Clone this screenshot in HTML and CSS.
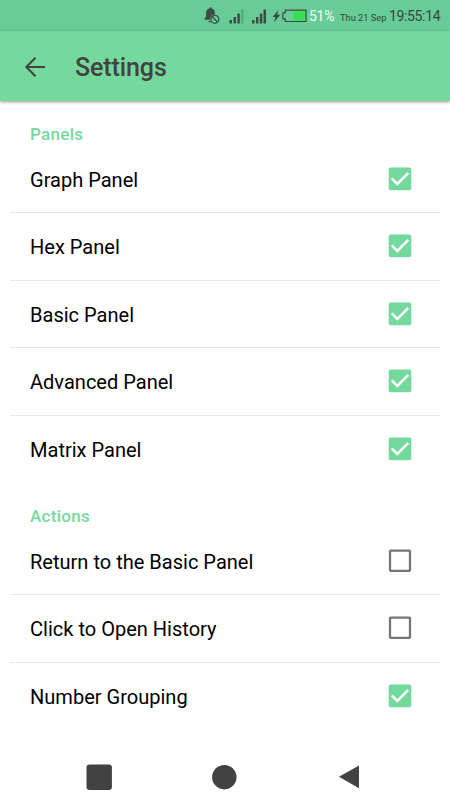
FILE: index.html
```html
<!DOCTYPE html>
<html lang="en">
<head>
<meta charset="utf-8">
<title>Settings</title>
<link rel="stylesheet" href="styles.css">
</head>
<body>
<svg class="defs" width="0" height="0">
  <symbol id="checked" viewBox="0 0 24 24">
    <rect x=".7" y=".6" width="22.6" height="22.6" rx="2" fill="#73d99c"/>
    <path d="M3.700 11.300 9.300 16.900 20.300 5.900" fill="none" stroke="#fff" stroke-width="2.600"/>
  </symbol>
  <symbol id="unchecked" viewBox="0 0 24 24">
    <rect x="2" y="1.600" width="20" height="20.200" rx=".8" fill="none" stroke="#757575" stroke-width="2.300"/>
  </symbol>
</svg>
<div class="status">
  <svg class="status-icons" width="112" height="31" viewBox="0 0 112 31" fill="#3d4b43">
    <path d="M4.500 19.800v-1.300l1.600-1.700v-4c0-2.300 1.100-3.900 3.300-4.400 0-1.500 2.200-1.500 2.200 0 2.200.5 3.300 2.100 3.300 4.400v1.400a5 5 0 0 0-5 5.600zM8.500 21h2v1.600c-1.100.1-1.900-.6-2-1.600z"/>
    <circle cx="14.800" cy="19.300" r="4" fill="none" stroke="#3d4b43" stroke-width="1.300"/>
    <path d="m12 16.500 5.600 5.600" stroke="#3d4b43" stroke-width="1.300"/>
    <path d="M29.500 20h2.500v3.500h-2.500zM33.500 17h2.500v6.500h-2.500zM37.300 13.500h2.500v10h-2.500z"/>
    <path d="M41 9.500h2.400v14H41z" opacity=".28"/>
    <path d="M52 20h2.500v3.500H52zM56 17h2.500v6.500H56zM59.800 13.500h2.500v10h-2.500zM63.500 9.500H66v14h-2.500z"/>
    <path d="m78.500 10-6 7h3l-1.700 5.300 6.700-7.600h-3.200z"/>
    <path d="M85.300 10.200H106v11.300H85.300v-2.600h-2.400v-6h2.400z" fill="none" stroke="#3d4b43" stroke-width="1.200"/>
    <path d="M93 11.200h12v9.300H93z" fill="#35e052"/>
  </svg>
  <span class="battery">51%</span>
  <span class="date">Thu 21 Sep</span>
  <span class="clock">19:55:14</span>
</div>
<header class="bar">
  <svg width="24" height="24" viewBox="0 0 24 24" fill="none" stroke="#424242" stroke-width="2"><path d="M22 12H3.500M12.500 2.800 3.300 12l9.200 9.200"/></svg>
  <h1>Settings</h1>
</header>
<main>
  <section>
    <h2>Panels</h2>
    <div class="row"><span>Graph Panel</span><svg class="box"><use href="#checked"/></svg></div>
    <div class="row"><span>Hex Panel</span><svg class="box"><use href="#checked"/></svg></div>
    <div class="row"><span>Basic Panel</span><svg class="box"><use href="#checked"/></svg></div>
    <div class="row"><span>Advanced Panel</span><svg class="box"><use href="#checked"/></svg></div>
    <div class="row"><span>Matrix Panel</span><svg class="box"><use href="#checked"/></svg></div>
  </section>
  <section>
    <h2>Actions</h2>
    <div class="row"><span>Return to the Basic Panel</span><svg class="box"><use href="#unchecked"/></svg></div>
    <div class="row"><span>Click to Open History</span><svg class="box"><use href="#unchecked"/></svg></div>
    <div class="row"><span>Number Grouping</span><svg class="box"><use href="#checked"/></svg></div>
  </section>
</main>
<nav>
  <svg width="28" height="28" viewBox="0 0 28 28"><rect x="1.500" y="1.500" width="25.400" height="25.600" rx="3" fill="#424242"/></svg>
  <svg width="28" height="28" viewBox="0 0 28 28"><circle cx="14.300" cy="14.200" r="12.200" fill="#424242"/></svg>
  <svg width="28" height="28" viewBox="0 0 28 28"><path d="M4 13.800 24 2.500v22.800z" fill="#424242"/></svg>
</nav>
</body>
</html>
```
FILE: styles.css
```css
* { box-sizing: border-box; }
body {
  margin: 0;
  width: 450px;
  height: 800px;
  display: flex;
  flex-direction: column;
  overflow: hidden;
  background: #fff;
  color: #000;
  font-family: Roboto, sans-serif;
}
.defs { position: absolute; }
.status {
  height: 31px;
  flex: none;
  display: flex;
  align-items: baseline;
  padding-left: 200px;
  background: #68cc98;
  line-height: 33px;
  white-space: nowrap;
  color: #35453c;
}
.status-icons { flex: none; align-self: flex-start; margin-right: -3px; }
.battery { width: 31px; font-size: 14px; letter-spacing: -.3px; color: #effff5; }
.date { width: 49px; font-size: 9.300px; }
.clock { font-size: 14px; letter-spacing: -.35px; }
.bar {
  height: 70px;
  flex: none;
  display: flex;
  align-items: center;
  gap: 28px;
  padding-left: 23px;
  background: #75d99e;
  box-shadow: 0 1px 3px rgba(0, 0, 0, .4);
}
.bar svg { margin-top: 1px; }
h1 { margin: 3px 0 0; font-size: 25px; font-weight: 500; letter-spacing: -.1px; color: #424242; }
main { flex: none; height: 652px; }
h2 {
  height: 44.500px;
  margin: 0;
  padding: 22px 30px 0;
  font-size: 17px;
  line-height: 22px;
  font-weight: 500;
  letter-spacing: .3px;
  color: #75d99e;
}
.row {
  height: 67.500px;
  margin: 0 10px;
  padding: 0 28px 0 20px;
  display: flex;
  align-items: center;
  justify-content: space-between;
  border-bottom: 1px solid #e8e8e8;
  font-size: 20.050px;
}
.row:last-child { border-color: transparent; }
.row span { padding-top: 2px; }
.box { width: 24px; height: 24px; }
nav {
  display: flex;
  justify-content: space-between;
  padding: 10px 87px 0 85px;
}
```
